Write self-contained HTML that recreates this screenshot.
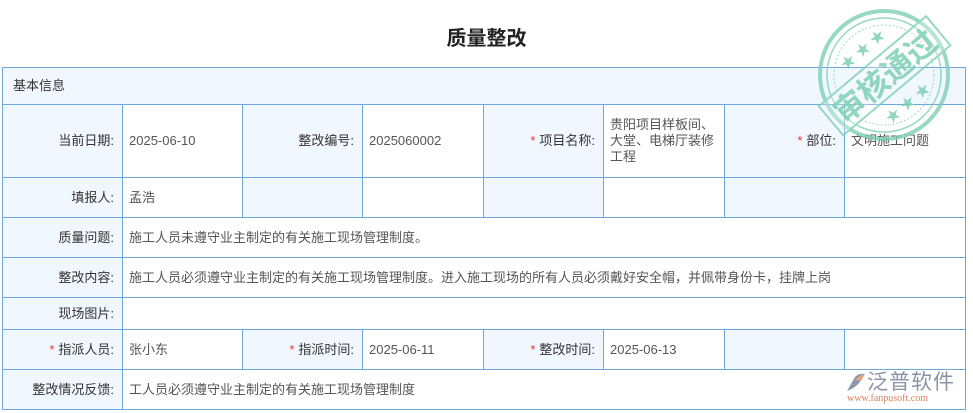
<!DOCTYPE html>
<html><head><meta charset="utf-8"><style>
*{margin:0;padding:0;box-sizing:border-box}
body{width:973px;height:413px;background:#fff;position:relative;overflow:hidden;font-family:"Liberation Sans","Noto Sans CJK SC",sans-serif;font-size:13px;color:#333}
.c{position:absolute;border:1px solid #6fa6dc;display:flex;align-items:center;padding:0 6px;line-height:16px}
.l{background:#f0f7fe;justify-content:flex-end;padding-right:8px;color:#333}
.v{background:#fff;color:#555}
.s{color:#e33;margin-right:4px}
h1{position:absolute;top:22px;left:0;width:973px;text-align:center;font-size:20px;font-weight:bold;color:#222}
</style></head><body>
<h1>质量整改</h1>
<div class="c l" style="left:2px;top:67px;width:964px;height:38px;justify-content:flex-start;padding-left:10px">基本信息</div>

<div class="c l" style="left:2px;top:104px;width:121px;height:74px">当前日期:</div>
<div class="c v" style="left:122px;top:104px;width:121px;height:74px">2025-06-10</div>
<div class="c l" style="left:242px;top:104px;width:121px;height:74px">整改编号:</div>
<div class="c v" style="left:362px;top:104px;width:122px;height:74px">2025060002</div>
<div class="c l" style="left:483px;top:104px;width:121px;height:74px"><span class="s">*</span>项目名称:</div>
<div class="c v" style="left:603px;top:104px;width:122px;height:74px">贵阳项目样板间、大堂、电梯厅装修工程</div>
<div class="c l" style="left:724px;top:104px;width:121px;height:74px"><span class="s">*</span>部位:</div>
<div class="c v" style="left:844px;top:104px;width:122px;height:74px">文明施工问题</div>

<div class="c l" style="left:2px;top:177px;width:121px;height:41px">填报人:</div>
<div class="c v" style="left:122px;top:177px;width:121px;height:41px">孟浩</div>
<div class="c l" style="left:242px;top:177px;width:121px;height:41px"></div>
<div class="c v" style="left:362px;top:177px;width:122px;height:41px"></div>
<div class="c l" style="left:483px;top:177px;width:121px;height:41px"></div>
<div class="c v" style="left:603px;top:177px;width:122px;height:41px"></div>
<div class="c l" style="left:724px;top:177px;width:121px;height:41px"></div>
<div class="c v" style="left:844px;top:177px;width:122px;height:41px"></div>

<div class="c l" style="left:2px;top:217px;width:121px;height:41px">质量问题:</div>
<div class="c v" style="left:122px;top:217px;width:844px;height:41px">施工人员未遵守业主制定的有关施工现场管理制度。</div>
<div class="c l" style="left:2px;top:257px;width:121px;height:41px">整改内容:</div>
<div class="c v" style="left:122px;top:257px;width:844px;height:41px">施工人员必须遵守业主制定的有关施工现场管理制度。进入施工现场的所有人员必须戴好安全帽，并佩带身份卡，挂牌上岗</div>
<div class="c l" style="left:2px;top:297px;width:121px;height:33px">现场图片:</div>
<div class="c v" style="left:122px;top:297px;width:844px;height:33px"></div>

<div class="c l" style="left:2px;top:329px;width:121px;height:41px"><span class="s">*</span>指派人员:</div>
<div class="c v" style="left:122px;top:329px;width:121px;height:41px">张小东</div>
<div class="c l" style="left:242px;top:329px;width:121px;height:41px"><span class="s">*</span>指派时间:</div>
<div class="c v" style="left:362px;top:329px;width:122px;height:41px">2025-06-11</div>
<div class="c l" style="left:483px;top:329px;width:121px;height:41px"><span class="s">*</span>整改时间:</div>
<div class="c v" style="left:603px;top:329px;width:122px;height:41px">2025-06-13</div>
<div class="c l" style="left:724px;top:329px;width:121px;height:41px"></div>
<div class="c v" style="left:844px;top:329px;width:122px;height:41px"></div>

<div class="c l" style="left:2px;top:369px;width:121px;height:41px">整改情况反馈:</div>
<div class="c v" style="left:122px;top:369px;width:844px;height:41px">工人员必须遵守业主制定的有关施工现场管理制度</div>

<svg style="position:absolute;left:812px;top:5px" width="150" height="140" viewBox="0 0 150 140">
<g fill="none" stroke="#7fd0b5" opacity="0.8">
<circle cx="72" cy="70" r="64" stroke-width="4"/>
<circle cx="72" cy="70" r="57" stroke-width="1.5"/>
<circle cx="72" cy="70" r="50" stroke-width="1" stroke-dasharray="2 2"/>
<g transform="rotate(-40 72 70)">
<rect x="2" y="52" width="140" height="38" fill="#fff" fill-opacity="0.3" stroke-width="2"/>
</g>
</g>
<g transform="rotate(-40 72 70)" fill="#7fd0b5" opacity="0.85">
<text x="72" y="83" text-anchor="middle" font-size="31" font-weight="bold" font-family="Noto Sans CJK SC,sans-serif">审核通过</text>
<text x="72" y="42" text-anchor="middle" font-size="15">★ ★ ★</text>
<text x="72" y="112" text-anchor="middle" font-size="15">★ ★ ★</text>
</g>
</svg>

<div style="position:absolute;left:845px;top:368px;width:120px;height:40px">
<svg style="position:absolute;left:0;top:3px" width="22" height="22" viewBox="0 0 22 22"><path d="M2 20 L10 6 Q14 2 20 3 L14 12 Q10 17 2 20Z" fill="#8a96aa"/><path d="M10 9 Q14 4 20 3 L16 10Z" fill="#e6a27e"/></svg>
<div style="position:absolute;left:22px;top:0;font-size:21px;color:#8a93a6;letter-spacing:1px;font-family:'Noto Sans CJK SC',sans-serif;line-height:26px">泛普软件</div>
<div style="position:absolute;left:2px;top:25px;font-size:10px;color:#d9825c;font-family:'Liberation Serif',serif;white-space:nowrap">www.fanpusoft.com</div>
</div>
</body></html>
